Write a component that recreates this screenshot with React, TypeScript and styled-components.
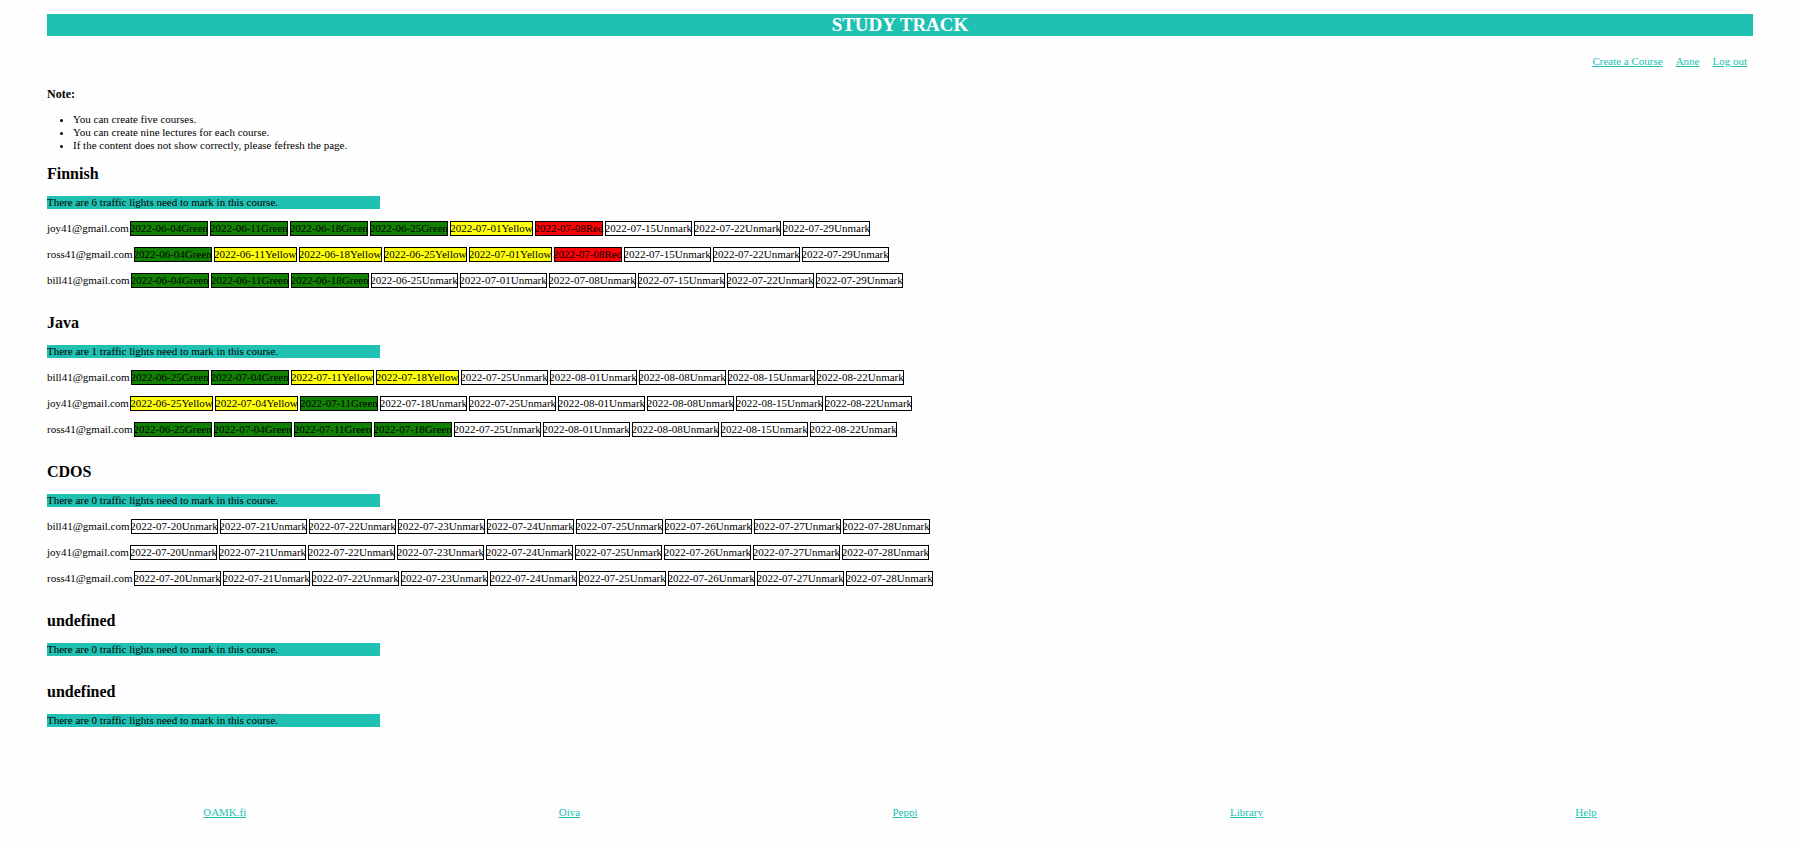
import React from "react";
import styled, { createGlobalStyle } from "styled-components";

type Light = "Green" | "Yellow" | "Red" | "Unmark";

interface Student {
  email: string;
  lights: Light[];
}

interface Course {
  id: number;
  name: string;
  toMark: number;
  dates: string[];
  students: Student[];
}

const teal = "#20c1b3";

const lightStyles: Record<Light, { colour: string; width: number }> = {
  Green: { colour: "#128002", width: 78 },
  Yellow: { colour: "#ffff0a", width: 83 },
  Red: { colour: "#fb0207", width: 68 },
  Unmark: { colour: "#ffffff", width: 87 },
};

const GlobalStyle = createGlobalStyle`
  body {
    margin: 0;
    background: #fefefe;
    color: #000;
    font-family: "Liberation Serif", "Times New Roman", serif;
    font-size: 11px;
    line-height: 13px;
  }
`;

const Page = styled.div`
  padding: 14px 48px 26px 47px;
`;

const Banner = styled.h1`
  margin: 0;
  background: ${teal};
  color: #fff;
  font-size: 19px;
  line-height: 22px;
  text-align: center;
`;

const TopNav = styled.nav`
  display: flex;
  justify-content: flex-end;
  gap: 13px;
  padding: 19px 6px;
`;

const Link = styled.a`
  color: ${teal};
  text-decoration: underline;
`;

const NoteTitle = styled.h3`
  margin: 0 0 12px;
  font-size: 12px;
  line-height: 14px;
`;

const NoteList = styled.ul`
  margin: 0 0 13px;
  padding-left: 26px;
`;

const CourseList = styled.main`
  display: flex;
  flex-direction: column;
  gap: 27px;
`;

const CourseSection = styled.section`
  display: flex;
  flex-direction: column;
  gap: 13px;
`;

const CourseTitle = styled.h2`
  margin: 0;
  font-size: 16px;
  line-height: 18px;
`;

const MarkNotice = styled.p`
  max-width: 333px;
  margin: 0;
  background: ${teal};
`;

const StudentRow = styled.div`
  display: flex;
  flex-wrap: wrap;
  align-items: center;
  gap: 2px;
  margin: -1px 0;
`;

const Email = styled.span`
  margin-right: -1px;
`;

const LightBox = styled.span<{ $light: Light }>`
  display: flex;
  justify-content: center;
  box-sizing: border-box;
  width: ${({ $light }) => lightStyles[$light].width}px;
  border: 1px solid #000;
  background: ${({ $light }) => lightStyles[$light].colour};
  white-space: nowrap;
`;

const Footer = styled.footer`
  display: flex;
  justify-content: space-around;
  margin-top: 79px;
`;

const finnishDates = ["06-04", "06-11", "06-18", "06-25", "07-01", "07-08", "07-15", "07-22", "07-29"];
const javaDates = ["06-25", "07-04", "07-11", "07-18", "07-25", "08-01", "08-08", "08-15", "08-22"];
const cdosDates = ["07-20", "07-21", "07-22", "07-23", "07-24", "07-25", "07-26", "07-27", "07-28"];

const courses: Course[] = [
  {
    id: 1,
    name: "Finnish",
    toMark: 6,
    dates: finnishDates,
    students: [
      { email: "joy41@gmail.com", lights: ["Green", "Green", "Green", "Green", "Yellow", "Red"] },
      { email: "ross41@gmail.com", lights: ["Green", "Yellow", "Yellow", "Yellow", "Yellow", "Red"] },
      { email: "bill41@gmail.com", lights: ["Green", "Green", "Green"] },
    ],
  },
  {
    id: 2,
    name: "Java",
    toMark: 1,
    dates: javaDates,
    students: [
      { email: "bill41@gmail.com", lights: ["Green", "Green", "Yellow", "Yellow"] },
      { email: "joy41@gmail.com", lights: ["Yellow", "Yellow", "Green"] },
      { email: "ross41@gmail.com", lights: ["Green", "Green", "Green", "Green"] },
    ],
  },
  {
    id: 3,
    name: "CDOS",
    toMark: 0,
    dates: cdosDates,
    students: [
      { email: "bill41@gmail.com", lights: [] },
      { email: "joy41@gmail.com", lights: [] },
      { email: "ross41@gmail.com", lights: [] },
    ],
  },
  { id: 4, name: "undefined", toMark: 0, dates: [], students: [] },
  { id: 5, name: "undefined", toMark: 0, dates: [], students: [] },
];

const footerLinks = ["OAMK.fi", "Oiva", "Peppi", "Library", "Help"];

export default function App() {
  return (
    <>
      <GlobalStyle />
      <Page>
        <Banner>STUDY TRACK</Banner>
        <TopNav>
          <Link href="#create">Create a Course</Link>
          <Link href="#profile">Anne</Link>
          <Link href="#logout">Log out</Link>
        </TopNav>
        <NoteTitle>Note:</NoteTitle>
        <NoteList>
          <li>You can create five courses.</li>
          <li>You can create nine lectures for each course.</li>
          <li>If the content does not show correctly, please fefresh the page.</li>
        </NoteList>
        <CourseList>
          {courses.map((course) => (
            <CourseSection key={course.id}>
              <CourseTitle>{course.name}</CourseTitle>
              <MarkNotice>
                There are {course.toMark} traffic lights need to mark in this course.
              </MarkNotice>
              {course.students.map((student) => (
                <StudentRow key={student.email}>
                  <Email>{student.email}</Email>
                  {course.dates.map((date, i) => {
                    const light = student.lights[i] ?? "Unmark";
                    return (
                      <LightBox key={date} $light={light}>
                        {`2022-${date}${light}`}
                      </LightBox>
                    );
                  })}
                </StudentRow>
              ))}
            </CourseSection>
          ))}
        </CourseList>
        <Footer>
          {footerLinks.map((label) => (
            <Link key={label} href={`#${label}`}>
              {label}
            </Link>
          ))}
        </Footer>
      </Page>
    </>
  );
}
